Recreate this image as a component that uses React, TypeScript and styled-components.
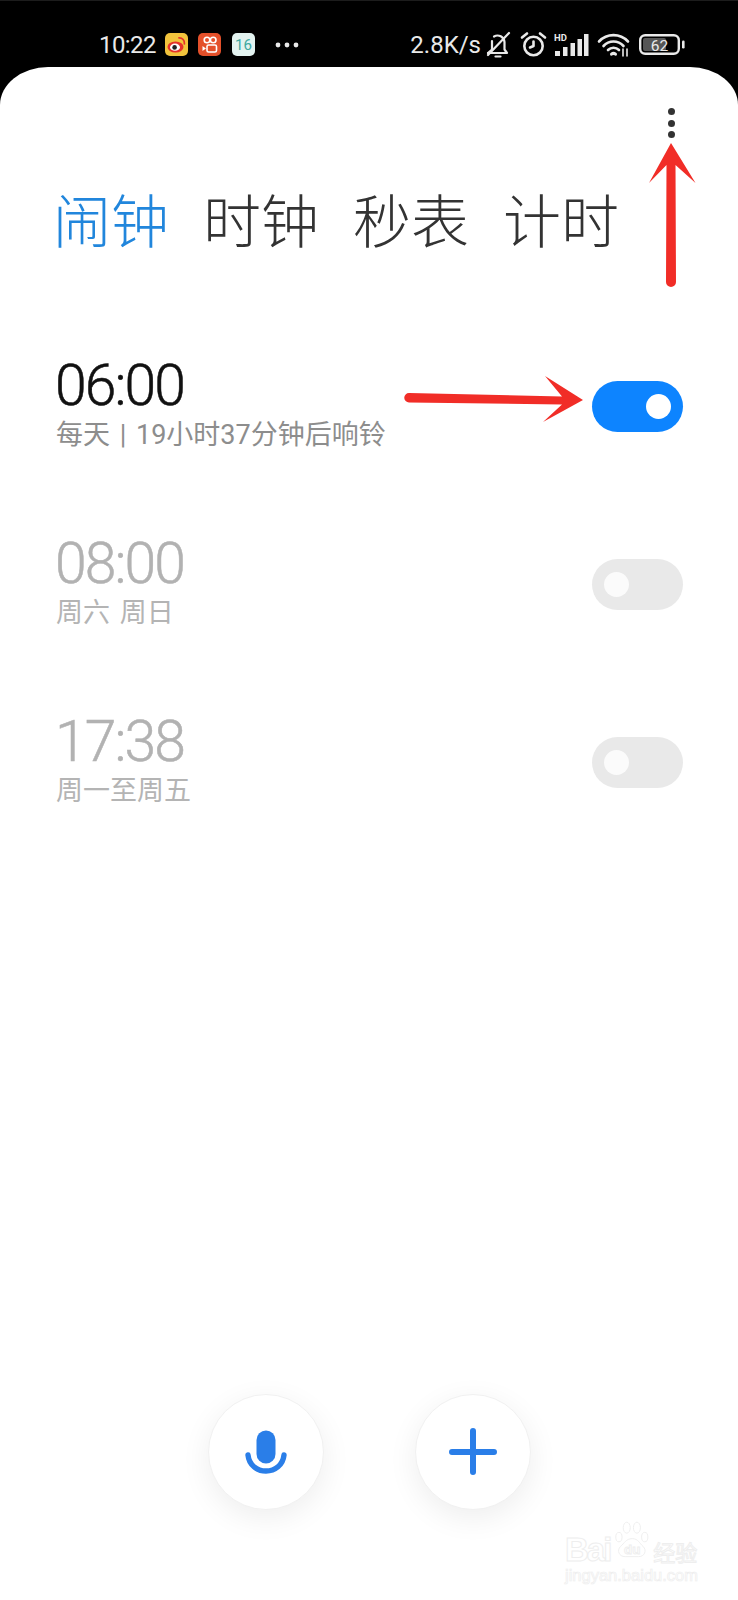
import React from "react";
import styled, { createGlobalStyle } from "styled-components";

const Global = createGlobalStyle`
  html, body { margin: 0; padding: 0; background: #000; }
  * { box-sizing: border-box; }
`;

const SANS = `"Roboto", "Noto Sans CJK SC", sans-serif`;

const Screen = styled.div`
  width: 738px;
  height: 1600px;
  display: flex;
  flex-direction: column;
  background: #000;
  font-family: ${SANS};
  overflow: hidden;
`;

const StatusBar = styled.div`
  height: 67px;
  flex: none;
  display: flex;
  align-items: center;
  justify-content: space-between;
  padding: 21px 52px 0 99px;
  color: #e9e9e9;
  border-top: 1px solid #1c1c1c;
`;

const StatusGroup = styled.div`
  display: flex;
  align-items: center;
`;

const ClockText = styled.span`
  font-size: 24px;
  line-height: 28px;
  letter-spacing: -0.6px;
  margin-right: 9px;
`;

const NotifIcon = styled.svg`
  display: block;
  width: 23px;
  height: 23px;
  margin-right: 10.5px;
`;

const MoreDots = styled.svg`
  display: block;
  width: 24px;
  height: 6px;
  margin-left: 10px;
`;

const SpeedText = styled.span`
  font-size: 24px;
  line-height: 28px;
  letter-spacing: 0;
  margin-right: 5px;
`;

const SysIcon = styled.svg<{ $gap: number }>`
  display: block;
  margin-right: ${(p) => p.$gap}px;
`;

const Card = styled.main`
  position: relative;
  flex: 1;
  display: flex;
  flex-direction: column;
  background: #fff;
  border-radius: 48px 48px 0 0 / 38px 38px 0 0;
`;

const MenuRow = styled.div`
  display: flex;
  justify-content: flex-end;
  padding: 41px 63.5px 0 0;
  height: 115px;
`;

const MenuButton = styled.div`
  display: flex;
  flex-direction: column;
  gap: 4.5px;
`;

const MenuDot = styled.span`
  width: 7px;
  height: 7px;
  border-radius: 50%;
  background: #333;
`;

const Tabs = styled.nav`
  display: flex;
  gap: 34px;
  padding-left: 53px;
`;

const Tab = styled.span<{ $active?: boolean }>`
  font-family: "Noto Sans CJK SC", sans-serif;
  font-size: 58px;
  line-height: 72px;
  font-weight: 300;
  color: ${(p) => (p.$active ? "#2186dc" : "#333")};
`;

const AlarmList = styled.section`
  display: flex;
  flex-direction: column;
  gap: 83px;
  padding: 103px 55px 0 56px;
`;

const AlarmRow = styled.div`
  display: flex;
  align-items: center;
  justify-content: space-between;
`;

const AlarmInfo = styled.div`
  display: flex;
  flex-direction: column;
`;

const AlarmTime = styled.div<{ $on?: boolean }>`
  font-size: 57px;
  line-height: 56px;
  font-weight: 300;
  letter-spacing: -1.9px;
  padding-top: 1px;
  margin-bottom: 4px;
  margin-left: -1px;
  -webkit-text-stroke: 0.5px currentColor;
  color: ${(p) => (p.$on ? "#111" : "#b2b2b2")};
`;

const AlarmMeta = styled.div<{ $on?: boolean }>`
  font-size: 27px;
  line-height: 34px;
  word-spacing: 3px;
  color: ${(p) => (p.$on ? "#8d8d8d" : "#b4b4b4")};
`;

const Switch = styled.div<{ $on?: boolean }>`
  width: 91px;
  height: 51px;
  margin-top: 3px;
  padding: 0 12px;
  border-radius: 25.5px;
  display: flex;
  align-items: center;
  justify-content: ${(p) => (p.$on ? "flex-end" : "flex-start")};
  background: ${(p) => (p.$on ? "#0d84ff" : "#e9e9e9")};
`;

const Knob = styled.span<{ $on?: boolean }>`
  width: 25px;
  height: 25px;
  border-radius: 50%;
  background: ${(p) => (p.$on ? "#fff" : "#fbfbfb")};
`;

const FabRow = styled.div`
  margin-top: auto;
  padding-bottom: 90px;
  display: flex;
  justify-content: center;
  gap: 91px;
`;

const Fab = styled.button`
  width: 116px;
  height: 116px;
  padding: 0;
  display: flex;
  align-items: center;
  justify-content: center;
  border-radius: 50%;
  background: #fff;
  border: 1px solid #f1f1f1;
  box-shadow: 0 8px 30px rgba(0, 0, 0, 0.07);
`;

const FabIcon = styled.svg`
  display: block;
  width: 48px;
  height: 48px;
`;

const Annotation = styled.svg<{ $x: number; $y: number }>`
  position: absolute;
  left: ${(p) => p.$x}px;
  top: ${(p) => p.$y}px;
  display: block;
`;

const Watermark = styled.div`
  position: absolute;
  left: 565px;
  top: 1453px;
  width: 140px;
  color: #fff;
  -webkit-text-stroke: 1px #eeeeee;
  font-family: "Liberation Sans", sans-serif;
  display: flex;
  flex-wrap: wrap;
  align-items: flex-end;
`;

const WatermarkBai = styled.span`
  font-size: 33px;
  line-height: 24px;
  font-weight: 700;
  letter-spacing: -2px;
`;

const WatermarkPaw = styled.svg`
  display: block;
  margin-left: 5px;
`;

const WatermarkCn = styled.span`
  font-family: "Noto Sans CJK SC", sans-serif;
  font-size: 22px;
  line-height: 22px;
  margin-left: 2px;
`;

const WatermarkUrl = styled.span`
  width: 100%;
  font-size: 16.5px;
  line-height: 20px;
  margin-top: 3px;
  -webkit-text-stroke: 0.7px #eeeeee;
`;

const alarms = [
  { time: "06:00", meta: "每天 | 19小时37分钟后响铃", on: true },
  { time: "08:00", meta: "周六 周日", on: false },
  { time: "17:38", meta: "周一至周五", on: false },
];

const RED = "#f12d27";

export default function App() {
  return (
    <Screen>
      <Global />
      <StatusBar>
        <StatusGroup>
          <ClockText>10:22</ClockText>
          <NotifIcon viewBox="0 0 23 23">
            <rect width="23" height="23" rx="5" fill="#f2c33c" />
            <ellipse cx="10.5" cy="14" rx="8" ry="5.6" fill="#e5322a" />
            <ellipse cx="10" cy="14.2" rx="5" ry="3.6" fill="#fff" />
            <circle cx="9.6" cy="14.4" r="2.3" fill="#222" />
            <path d="M14 4.8a5.2 5.2 0 0 1 5.4 6" fill="none" stroke="#e5322a" strokeWidth="1.8" strokeLinecap="round" />
          </NotifIcon>
          <NotifIcon viewBox="0 0 23 23">
            <rect width="23" height="23" rx="5" fill="#e4502a" />
            <circle cx="9" cy="7" r="2.8" fill="none" stroke="#fff" strokeWidth="1.6" />
            <circle cx="15.2" cy="7" r="2.8" fill="none" stroke="#fff" strokeWidth="1.6" />
            <rect x="9" y="12" width="9.5" height="7" rx="1.6" fill="none" stroke="#fff" strokeWidth="1.6" />
            <path d="M8 15.5 4.5 13v5z" fill="#fff" />
          </NotifIcon>
          <NotifIcon viewBox="0 0 23 23">
            <rect width="23" height="23" rx="5" fill="#e3f3f0" />
            <text x="11.5" y="17" fontSize="15" fill="#3ea8a0" textAnchor="middle" fontFamily="Roboto, sans-serif">16</text>
          </NotifIcon>
          <MoreDots viewBox="0 0 24 6">
            <circle cx="3" cy="3" r="2.4" fill="#e9e9e9" />
            <circle cx="12" cy="3" r="2.4" fill="#e9e9e9" />
            <circle cx="21" cy="3" r="2.4" fill="#e9e9e9" />
          </MoreDots>
        </StatusGroup>
        <StatusGroup>
          <SpeedText>2.8K/s</SpeedText>
          <SysIcon $gap={9} width="25" height="28" viewBox="0 0 25 28" fill="none" stroke="#e9e9e9" strokeWidth="2.2" strokeLinecap="round" strokeLinejoin="round">
            <path d="M2 22h19l-2.5-3.5V11A7 7 0 0 0 8 5.5" />
            <path d="M6 10v8.5L2 22" />
            <path d="M9.5 25.5h5" />
            <path d="M2 24 23 2" />
          </SysIcon>
          <SysIcon $gap={7} width="27" height="27" viewBox="0 0 27 27" fill="none" stroke="#e9e9e9" strokeWidth="2.6" strokeLinecap="round" strokeLinejoin="round">
            <circle cx="13.5" cy="15" r="9.2" />
            <path d="M13.5 10.5V15l-3.5 1.5" />
            <path d="M2 6.5 7 2.5" />
            <path d="M25 6.5 20 2.5" />
          </SysIcon>
          <SysIcon $gap={8} width="35" height="23" viewBox="0 0 35 23">
            <text x="0" y="8" fontSize="9.5" fontWeight="700" fill="#e9e9e9" fontFamily="Roboto, sans-serif">HD</text>
            <rect x="1" y="18" width="5" height="5" fill="#e9e9e9" />
            <rect x="9" y="14" width="4.5" height="9" fill="#e9e9e9" />
            <rect x="16.5" y="10" width="4.5" height="13" fill="#e9e9e9" />
            <rect x="23.5" y="6" width="4.5" height="17" fill="#e9e9e9" />
            <rect x="30" y="1" width="4.5" height="22" fill="#e9e9e9" />
          </SysIcon>
          <SysIcon $gap={9} width="33" height="25" viewBox="0 0 33 25" fill="none" stroke="#e9e9e9" strokeWidth="2.6" strokeLinecap="round">
            <path d="M2 9.5C10 1 23 1 31 9.5" />
            <path d="M6.5 14C12 8 21 8 26.5 14" />
            <path d="M11 18c3-3 8-3 11 0" />
            <path d="M14.5 22.2c1.2-1 2.8-1 4 0" strokeWidth="3" />
            <path d="M26 17v7M30 17v7" strokeWidth="1.6" />
          </SysIcon>
          <SysIcon $gap={0} width="47" height="21" viewBox="0 0 47 21">
            <rect x="1.2" y="1.2" width="38.6" height="18.6" rx="5" fill="none" stroke="#e9e9e9" strokeWidth="2.4" />
            <rect x="4" y="4" width="23" height="13" rx="2" fill="#555" />
            <text x="20.5" y="16.5" fontSize="15.5" fill="#e9e9e9" textAnchor="middle" fontFamily="Roboto, sans-serif">62</text>
            <rect x="43" y="6.5" width="2.6" height="8" rx="1.2" fill="#e9e9e9" />
          </SysIcon>
        </StatusGroup>
      </StatusBar>

      <Card>
        <MenuRow>
          <MenuButton>
            <MenuDot />
            <MenuDot />
            <MenuDot />
          </MenuButton>
        </MenuRow>

        <Tabs>
          <Tab $active>闹钟</Tab>
          <Tab>时钟</Tab>
          <Tab>秒表</Tab>
          <Tab>计时</Tab>
        </Tabs>

        <AlarmList>
          {alarms.map((a) => (
            <AlarmRow key={a.time}>
              <AlarmInfo>
                <AlarmTime $on={a.on}>{a.time}</AlarmTime>
                <AlarmMeta $on={a.on}>{a.meta}</AlarmMeta>
              </AlarmInfo>
              <Switch $on={a.on}>
                <Knob $on={a.on} />
              </Switch>
            </AlarmRow>
          ))}
        </AlarmList>

        <FabRow>
          <Fab aria-label="voice">
            <FabIcon viewBox="0 -2.5 48 48">
              <rect x="14.5" y="0" width="19" height="33" rx="9.5" fill="#2a7ee8" />
              <path d="M6 24.5c1 10 9 16 18 16s17-6 18-16" fill="none" stroke="#2a7ee8" strokeWidth="5.4" strokeLinecap="round" />
            </FabIcon>
          </Fab>
          <Fab aria-label="add">
            <FabIcon viewBox="0 0 48 48">
              <path d="M24 3v41M3 24h42" fill="none" stroke="#2a7ee8" strokeWidth="6" strokeLinecap="round" />
            </FabIcon>
          </Fab>
        </FabRow>

        <Annotation $x={645} $y={76} width="54" height="146" viewBox="0 0 54 146">
          <path d="M26 0 4 40 21.5 22 21 139a5 5 0 0 0 10 0L30.5 22 50.5 40z" fill={RED} />
        </Annotation>
        <Annotation $x={400} $y={305} width="188" height="50" viewBox="0 0 188 50">
          <path d="M183 28 145 4 162 24.5 9 21a4.5 4.5 0 0 0 0 9.5L162 32.5 143 50z" fill={RED} />
        </Annotation>

        <Watermark>
          <WatermarkBai>Bai</WatermarkBai>
          <WatermarkPaw width="36" height="42" viewBox="0 0 46 50" fill="#fff" stroke="#eeeeee" strokeWidth="1.2">
            <ellipse cx="5" cy="20" rx="4" ry="6" />
            <ellipse cx="15" cy="8" rx="4.5" ry="7" />
            <ellipse cx="28" cy="8" rx="4.5" ry="7" />
            <ellipse cx="38" cy="20" rx="4" ry="6" />
            <path d="M22 22c8 0 9 6 14 10 5 5 2 13-6 13H13C5 45 2 37 7 32c5-4 7-10 15-10z" />
            <text x="22" y="41" fontSize="17" fontWeight="700" textAnchor="middle" fontFamily="Liberation Sans, sans-serif">du</text>
          </WatermarkPaw>
          <WatermarkCn>经验</WatermarkCn>
          <WatermarkUrl>jingyan.baidu.com</WatermarkUrl>
        </Watermark>
      </Card>
    </Screen>
  );
}
